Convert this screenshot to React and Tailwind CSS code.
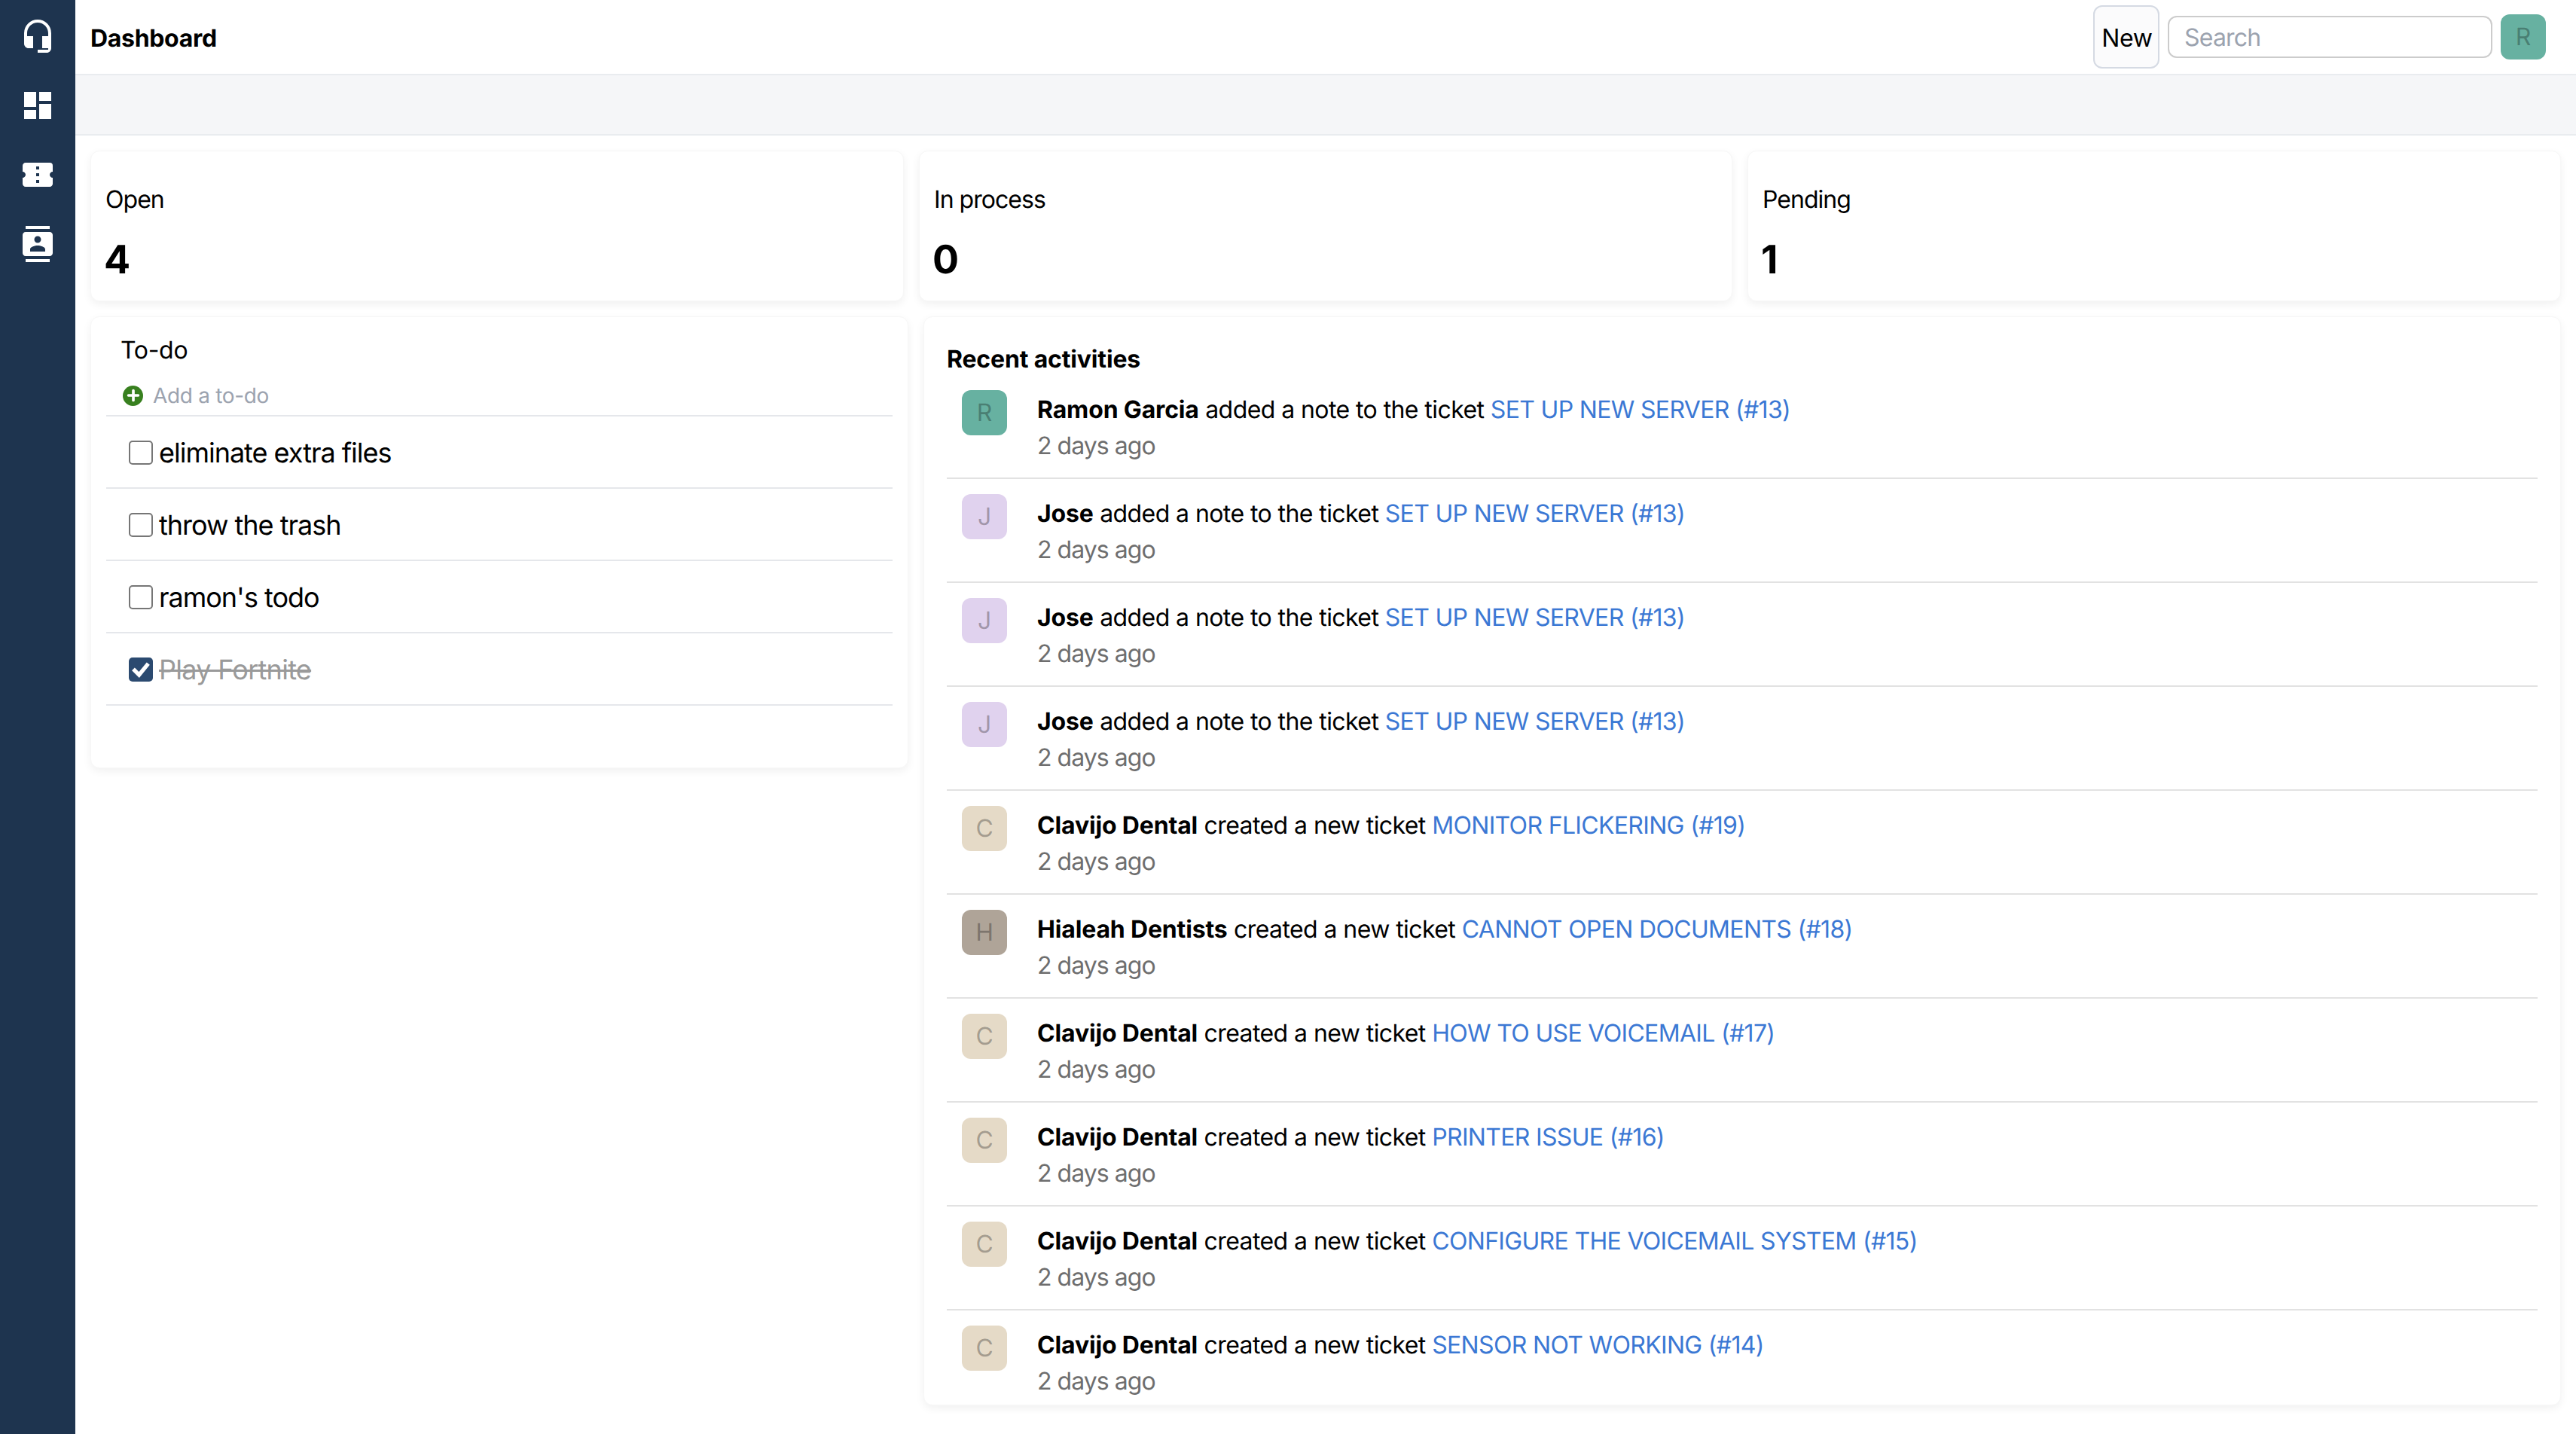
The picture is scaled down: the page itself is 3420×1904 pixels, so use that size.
import { MdHeadsetMic, MdDashboard, MdConfirmationNumber, MdContacts } from 'react-icons/md'

const COLORS = {
  R: 'bg-[#67b1a1]',
  J: 'bg-[#e0d2ee]',
  C: 'bg-[#e5dac7]',
  H: 'bg-[#afa498]',
}

const activities = [
  { who: 'Ramon Garcia', what: 'added a note to the ticket', ticket: 'SET UP NEW SERVER (#13)' },
  { who: 'Jose', what: 'added a note to the ticket', ticket: 'SET UP NEW SERVER (#13)' },
  { who: 'Jose', what: 'added a note to the ticket', ticket: 'SET UP NEW SERVER (#13)' },
  { who: 'Jose', what: 'added a note to the ticket', ticket: 'SET UP NEW SERVER (#13)' },
  { who: 'Clavijo Dental', what: 'created a new ticket', ticket: 'MONITOR FLICKERING (#19)' },
  { who: 'Hialeah Dentists', what: 'created a new ticket', ticket: 'CANNOT OPEN DOCUMENTS (#18)' },
  { who: 'Clavijo Dental', what: 'created a new ticket', ticket: 'HOW TO USE VOICEMAIL (#17)' },
  { who: 'Clavijo Dental', what: 'created a new ticket', ticket: 'PRINTER ISSUE (#16)' },
  { who: 'Clavijo Dental', what: 'created a new ticket', ticket: 'CONFIGURE THE VOICEMAIL SYSTEM (#15)' },
  { who: 'Clavijo Dental', what: 'created a new ticket', ticket: 'SENSOR NOT WORKING (#14)' },
]

const todos = [
  { text: 'eliminate extra files', done: false },
  { text: 'throw the trash', done: false },
  { text: "ramon's todo", done: false },
  { text: 'Play Fortnite', done: true },
]

const cardClass = 'bg-white rounded-xl border border-[#f7f7f7] shadow-[0_4px_12px_rgba(0,0,0,0.06)]'

function Avatar({ letter, className = '' }) {
  return (
    <div className={`w-[60px] h-[60px] shrink-0 rounded-xl flex items-center justify-center text-[32px] text-black/30 ${COLORS[letter]} ${className}`}>
      {letter}
    </div>
  )
}

function Stat({ label, value }) {
  return (
    <div className={`${cardClass} h-[200px] pl-[19px] pt-[40px]`}>
      <div className="text-[32px] leading-[48px] tracking-[-0.03em]">{label}</div>
      <div className="text-[52px] leading-[60px] font-bold mt-[26px] -ml-0.5">{value}</div>
    </div>
  )
}

function Checkbox({ done }) {
  if (done) {
    return (
      <span className="w-8 h-8 shrink-0 mt-0.5 rounded-[5px] bg-[#2b4a70] flex items-center justify-center">
        <svg viewBox="0 0 24 24" className="w-7 h-7" fill="none" stroke="white" strokeWidth="4.5" strokeLinecap="square">
          <path d="M5 13l5 5 9-11" />
        </svg>
      </span>
    )
  }
  return <span className="w-8 h-8 shrink-0 mt-0.5 rounded-[5px] border-2 border-[#767676] bg-white" />
}

export default function App() {
  return (
    <div className="flex min-h-[1904px] bg-white text-black tracking-[-0.02em] [text-rendering:geometricPrecision] font-['Inter',sans-serif]">
      {/* Sidebar */}
      <aside className="w-[100px] shrink-0 bg-[#1e344f] text-white flex flex-col items-center gap-11 pt-6">
        <MdHeadsetMic size={48} />
        <MdDashboard size={48} />
        <MdConfirmationNumber size={48} />
        <MdContacts size={48} />
      </aside>

      <main className="flex-1 min-w-0">
        {/* Header */}
        <header className="h-[100px] border-b-2 border-[#e9ecef] flex items-center pl-5 pr-10">
          <h1 className="text-[32px] font-bold flex-1 pt-1">Dashboard</h1>
          <button className="w-[88px] h-[84px] pt-1 pl-0.5 rounded-xl border-2 border-[#d5dae3] bg-[#fbfbfc] text-[32px]">New</button>
          <input
            placeholder="Search"
            className="w-[431px] h-14 ml-[11px] rounded-xl border-2 border-[#cccccc] px-5 text-[32px] tracking-[-0.025em] [text-rendering:geometricPrecision] placeholder:text-[#9ca3af] outline-none"
          />
          <Avatar letter="R" className="ml-[11px]" />
        </header>

        {/* Toolbar band */}
        <div className="h-[80px] bg-[#f5f6f8] border-b-2 border-[#e9ecef]" />

        <div className="pt-5 pl-5 pr-5">
          <div className="grid grid-cols-3 gap-5">
            <Stat label="Open" value="4" />
            <Stat label="In process" value="0" />
            <Stat label="Pending" value="1" />
          </div>

          <div className="flex items-start gap-5 mt-5">
            {/* To-do */}
            <section className={`${cardClass} w-[1086px] shrink-0 h-[600px] px-5 pt-[20px]`}>
              <div className="text-[32px] leading-[48px] pl-[19px]">To-do</div>
              <div className="flex items-center gap-[13px] pl-[22px] pt-[10px] h-[64px] text-[28px] text-[#9ca3af] border-b-2 border-[#e5e7eb]">
                <span className="w-[27px] h-[27px] rounded-full bg-[#38801f] text-white flex items-center justify-center">
                  <svg viewBox="0 0 24 24" className="w-[22px] h-[22px]" stroke="white" strokeWidth="4" strokeLinecap="round">
                    <path d="M12 5v14M5 12h14" />
                  </svg>
                </span>
                Add a to-do
              </div>
              {todos.map((t) => (
                <div key={t.text} className="h-24 flex items-center gap-2 pl-[30px] border-b-2 border-[#e5e7eb]">
                  <Checkbox done={t.done} />
                  <span className={`text-[36px] pt-0.5 ${t.done ? 'line-through decoration-[3px] text-[#9a9a9a] tracking-[-0.02em]' : 'tracking-[-0.028em]'}`}>{t.text}</span>
                </div>
              ))}
            </section>

            {/* Recent activities */}
            <section className={`${cardClass} flex-1 min-w-0 h-[1446px] pl-[30px] pr-[30px] pt-[31px]`}>
              <h2 className="h-[46px] pt-0.5 text-[32px] leading-[46px] tracking-[-0.005em] font-bold">Recent activities</h2>
              <ul>
                {activities.map((a, i) => (
                  <li key={i} className={`h-[138px] flex pl-5 pt-5 ${i < activities.length - 1 ? 'border-b-2 border-[#e2e2e2]' : ''}`}>
                    <Avatar letter={a.who[0]} />
                    <div className="ml-10 pt-0.5">
                      <div className="text-[32px] leading-[48px] tracking-[-0.018em]">
                        <span className="font-bold tracking-[-0.005em]">{a.who}</span> {a.what}{' '}
                        <a className="text-[#3b78d4] tracking-[-0.021em]">{a.ticket}</a>
                      </div>
                      <div className="text-[32px] leading-[48px] tracking-[-0.03em] text-[#6e6e6e]">2 days ago</div>
                    </div>
                  </li>
                ))}
              </ul>
            </section>
          </div>
        </div>
      </main>
    </div>
  )
}
